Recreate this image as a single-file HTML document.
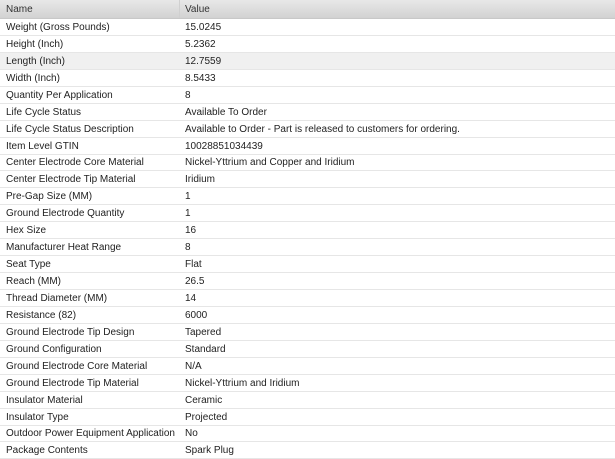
<!DOCTYPE html><html><head><style>
body{margin:0;width:615px;height:457px;overflow:hidden;background:#fff;font-family:"Liberation Sans",sans-serif;font-size:10px;color:#222}
.h{height:19px;background:linear-gradient(#e8e8e8,#d2d2d2);display:flex;align-items:center;border-bottom:1px solid #c8c8c8;box-sizing:border-box;color:#333}
.r{height:16.95px;display:flex;align-items:center;border-bottom:1px solid #e6e6e6;box-sizing:border-box;padding-top:1px}
.a{width:180px;padding-left:6px;white-space:nowrap;box-sizing:border-box}
.b{padding-left:5px;white-space:nowrap}
.g{background:#f0f0f0}
.h .a{border-right:1px solid #d0d0d0;height:100%;display:flex;align-items:center}
</style></head><body>
<div class="h"><div class="a">Name</div><div class="b">Value</div></div>
<div class="r"><div class="a">Weight (Gross Pounds)</div><div class="b">15.0245</div></div>
<div class="r"><div class="a">Height (Inch)</div><div class="b">5.2362</div></div>
<div class="r g"><div class="a">Length (Inch)</div><div class="b">12.7559</div></div>
<div class="r"><div class="a">Width (Inch)</div><div class="b">8.5433</div></div>
<div class="r"><div class="a">Quantity Per Application</div><div class="b">8</div></div>
<div class="r"><div class="a">Life Cycle Status</div><div class="b">Available To Order</div></div>
<div class="r"><div class="a">Life Cycle Status Description</div><div class="b">Available to Order - Part is released to customers for ordering.</div></div>
<div class="r"><div class="a">Item Level GTIN</div><div class="b">10028851034439</div></div>
<div class="r"><div class="a">Center Electrode Core Material</div><div class="b">Nickel-Yttrium and Copper and Iridium</div></div>
<div class="r"><div class="a">Center Electrode Tip Material</div><div class="b">Iridium</div></div>
<div class="r"><div class="a">Pre-Gap Size (MM)</div><div class="b">1</div></div>
<div class="r"><div class="a">Ground Electrode Quantity</div><div class="b">1</div></div>
<div class="r"><div class="a">Hex Size</div><div class="b">16</div></div>
<div class="r"><div class="a">Manufacturer Heat Range</div><div class="b">8</div></div>
<div class="r"><div class="a">Seat Type</div><div class="b">Flat</div></div>
<div class="r"><div class="a">Reach (MM)</div><div class="b">26.5</div></div>
<div class="r"><div class="a">Thread Diameter (MM)</div><div class="b">14</div></div>
<div class="r"><div class="a">Resistance (82)</div><div class="b">6000</div></div>
<div class="r"><div class="a">Ground Electrode Tip Design</div><div class="b">Tapered</div></div>
<div class="r"><div class="a">Ground Configuration</div><div class="b">Standard</div></div>
<div class="r"><div class="a">Ground Electrode Core Material</div><div class="b">N/A</div></div>
<div class="r"><div class="a">Ground Electrode Tip Material</div><div class="b">Nickel-Yttrium and Iridium</div></div>
<div class="r"><div class="a">Insulator Material</div><div class="b">Ceramic</div></div>
<div class="r"><div class="a">Insulator Type</div><div class="b">Projected</div></div>
<div class="r"><div class="a">Outdoor Power Equipment Application</div><div class="b">No</div></div>
<div class="r"><div class="a">Package Contents</div><div class="b">Spark Plug</div></div>
</body></html>
